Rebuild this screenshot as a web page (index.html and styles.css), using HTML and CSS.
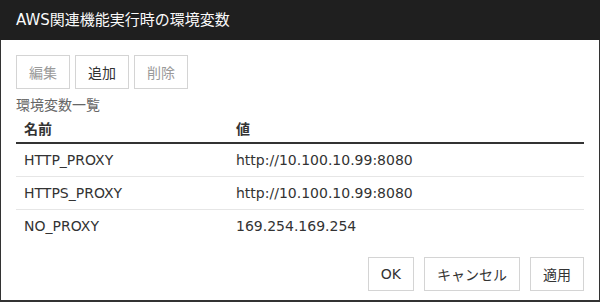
FILE: index.html
```html
<!DOCTYPE html>
<html lang="ja">
<head>
<meta charset="utf-8">
<link rel="stylesheet" href="styles.css">
</head>
<body>
<div class="dialog">
  <div class="titlebar">AWS関連機能実行時の環境変数</div>
  <div class="content">
    <div class="toolbar">
      <button class="btn" disabled>編集</button>
      <button class="btn">追加</button>
      <button class="btn" disabled>削除</button>
    </div>
    <div class="caption">環境変数一覧</div>
    <table class="vars">
      <thead>
        <tr><th class="col-name">名前</th><th>値</th></tr>
      </thead>
      <tbody>
        <tr><td>HTTP_PROXY</td><td>http://10.100.10.99:8080</td></tr>
        <tr><td>HTTPS_PROXY</td><td>http://10.100.10.99:8080</td></tr>
        <tr><td>NO_PROXY</td><td>169.254.169.254</td></tr>
      </tbody>
    </table>
    <div class="footer">
      <button class="btn">OK</button>
      <button class="btn">キャンセル</button>
      <button class="btn">適用</button>
    </div>
  </div>
</div>
</body>
</html>
```

FILE: styles.css
```css
html, body {
  margin: 0;
  padding: 0;
  background: #2a2a2a;
}
body {
  font-family: "DejaVu Sans", "Noto Sans CJK JP", sans-serif;
  font-size: 14px;
  color: #333;
}
.dialog {
  box-sizing: border-box;
  width: 600px;
  height: 302px;
  background: #fff;
  border: 1px solid #333;
  border-top: none;
  border-bottom-width: 2px;
  display: flex;
  flex-direction: column;
}
.titlebar {
  height: 40px;
  line-height: 40px;
  background: #1f1f1f;
  color: #fafafa;
  font-size: 15px;
  padding-left: 15px;
  margin: 0 -1px;
  padding-left: 16px;
}
.content {
  padding: 15px 15px 0 15px;
  display: flex;
  flex-direction: column;
}
.toolbar {
  display: flex;
  gap: 5px;
}
.btn {
  box-sizing: border-box;
  height: 34px;
  padding: 0 12px;
  border: 1px solid #d4d4d4;
  background: #fff;
  color: #333;
  font-family: inherit;
  font-size: 14px;
  border-radius: 0;
  margin: 0;
}
.btn:disabled {
  color: #9a9a9a;
}
.caption {
  margin-top: 7px;
  line-height: 18px;
  color: #666;
}
.vars {
  border-collapse: collapse;
  width: 100%;
  table-layout: fixed;
}
.vars th {
  text-align: left;
  font-weight: bold;
  height: 28px;
  padding: 0 8px;
  border-bottom: 2px solid #333;
  vertical-align: middle;
  color: #333;
}
.vars th.col-name {
  width: 196px;
}
.vars td {
  height: 32px;
  padding: 0 8px;
  border-bottom: 1px solid #e6e6e6;
  vertical-align: middle;
  color: #333;
}
.vars tbody tr:last-child td {
  border-bottom: none;
}
.footer {
  display: flex;
  justify-content: flex-end;
  gap: 10px;
  margin-top: 15px;
}
```
